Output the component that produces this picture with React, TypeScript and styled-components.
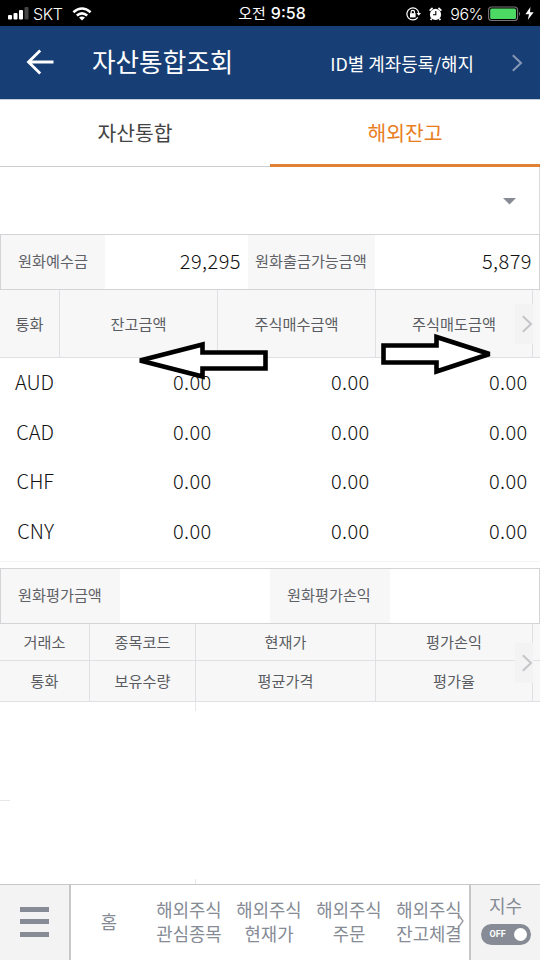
import React from 'react';
import styled, { createGlobalStyle } from 'styled-components';

const GlobalStyle = createGlobalStyle`
  * { box-sizing: border-box; }
  html, body { margin: 0; background: #fff; }
  body { font-family: "Noto Sans CJK KR", sans-serif; overflow: hidden; }
`;

const Screen = styled.div`
  position: relative;
  width: 540px;
  height: 960px;
  display: flex;
  flex-direction: column;
  background: #fff;
  color: #111;
  overflow: hidden;
  white-space: nowrap;
`;

const StatusBar = styled.div`
  height: 26px;
  flex: none;
  display: grid;
  grid-template-columns: 1fr auto 1fr;
  align-items: center;
  padding: 0 6px 0 8px;
  background: #000;
  color: #fff;
`;
const StatusGroup = styled.div<{ $end?: boolean }>`
  display: flex;
  align-items: center;
  height: 26px;
  padding-top: 1px;
  justify-content: ${p => (p.$end ? 'flex-end' : 'flex-start')};
`;
const Carrier = styled.span`
  margin: 0 9px 0 4px;
  font: 300 16px/26px Inter, sans-serif;
  letter-spacing: -0.35px;
`;
const Clock = styled.span`
  display: flex;
  gap: 5px;
  padding: 1px 0 0 2px;
  font: 500 16px/25px Inter, "Noto Sans CJK KR", sans-serif;
`;
const ClockPrefix = styled.span`
  font: 400 15px/24px "Noto Sans CJK KR", sans-serif;
`;
const Percent = styled.span`
  margin: 0 5px 0 8px;
  font: 300 16px/26px Inter, sans-serif;
  letter-spacing: -0.5px;
`;
const Gap = styled.i<{ $w: number }>`
  width: ${p => p.$w}px;
`;

const TitleBar = styled.header`
  height: 74px;
  flex: none;
  display: flex;
  align-items: center;
  padding: 0 17px 0 26px;
  background: #173e75;
  border-bottom: 1px solid #c3cddb;
  color: #fff;
`;
const BackIcon = styled.svg`
  margin-bottom: 2px;
`;
const Title = styled.h1`
  flex: 1;
  margin: 0 0 3px 38px;
  font-size: 25.6px;
  line-height: 40px;
  font-weight: 400;
`;
const TitleLink = styled.span`
  margin: 0 37px 0 0;
  font-size: 17.9px;
  line-height: 30px;
`;

const Tabs = styled.nav`
  height: 67px;
  flex: none;
  display: grid;
  grid-template-columns: 1fr 1fr;
`;
const Tab = styled.div<{ $active?: boolean }>`
  height: 67px;
  text-align: center;
  font-size: 20.4px;
  line-height: 65px;
  color: ${p => (p.$active ? '#e87d1e' : '#444')};
  border-bottom: ${p => (p.$active ? '3px solid #e08236' : '1px solid #ccced1')};
`;

const Picker = styled.div`
  height: 67px;
  flex: none;
  display: flex;
  justify-content: flex-end;
  align-items: center;
  padding: 1px 23px 0 0;
  border-right: 1px solid #d9dadd;
`;

const Summary = styled.div<{ $columns: string }>`
  height: 56px;
  flex: none;
  display: grid;
  grid-template-columns: ${p => p.$columns};
  border: 1px solid #d3d4d7;
`;
const SummaryLabel = styled.div<{ $pad: number }>`
  display: flex;
  align-items: center;
  padding: 0 0 5px ${p => p.$pad}px;
  background: #f7f7f8;
  color: #5f6167;
  font-size: 15.2px;
`;
const SummaryValue = styled.div`
  display: flex;
  align-items: center;
  justify-content: flex-end;
  padding: 0 7px 4px 0;
  font-size: 20px;
  font-weight: 300;
  letter-spacing: 0.45px;
`;

const HeaderGrid = styled.div<{ $columns: string; $rows: string }>`
  position: relative;
  flex: none;
  display: grid;
  grid-template-columns: ${p => p.$columns};
  grid-template-rows: ${p => p.$rows};
`;
const HeaderCell = styled.div`
  display: flex;
  align-items: center;
  justify-content: center;
  padding-bottom: 2px;
  background: #f7f7f8;
  border-right: 1px solid #dfe0e3;
  border-bottom: 1px solid #dfe0e3;
  color: #5a5c62;
  font-size: 15.2px;
  &:empty { border-right: 0; }
`;
const ScrollHint = styled.div`
  position: absolute;
  right: 7px;
  top: 50%;
  margin-top: -20px;
  width: 18px;
  height: 40px;
  display: flex;
  align-items: center;
  justify-content: flex-end;
  background: #f3f3f3;
`;

const Balances = styled.div`
  height: 204px;
  flex: none;
  border-bottom: 1px solid #f5f5f5;
`;
const BalanceRow = styled.div`
  display: grid;
  grid-template-columns: 60px 158px 158px 158px;
  height: 49.6px;
  line-height: 48px;
  font-size: 20px;
  font-weight: 300;
`;
const Currency = styled.span`
  padding-right: 6px;
  text-align: right;
`;
const Amount = styled.span`
  padding-right: 6.4px;
  text-align: right;
  letter-spacing: 0.4px;
`;
const Spacer = styled.div`
  height: 6px;
  flex: none;
`;

const Holdings = styled.div`
  flex: 1;
  display: grid;
  grid-template-columns: 195px 1fr;
  grid-template-rows: 9px 90px 1fr 5px;
`;
const ColumnTick = styled.i<{ $row: number }>`
  grid-column: 2;
  grid-row: ${p => p.$row};
  width: 1px;
  background: #e6e7e9;
`;
const RowTick = styled.i`
  grid-column: 1;
  grid-row: 2;
  width: 10px;
  height: 1px;
  align-self: end;
  background: #e6e7e9;
`;

const Footer = styled.footer`
  height: 76px;
  flex: none;
  display: grid;
  grid-template-columns: 71px 398px 71px;
  border-top: 1px solid #c6c7c9;
  color: #868b95;
`;
const MenuButton = styled.div`
  display: flex;
  flex-direction: column;
  align-items: center;
  gap: 7.4px;
  padding-top: 22px;
  background: #f3f3f4;
  border-right: 2px solid #c6c7c9;
`;
const MenuBar = styled.i`
  width: 29px;
  height: 5px;
  background: #868b95;
`;
const Shortcuts = styled.div`
  position: relative;
  display: grid;
  grid-template-columns: repeat(5, 80px);
  overflow: hidden;
`;
const Shortcut = styled.div`
  display: flex;
  flex-direction: column;
  justify-content: center;
  align-items: center;
  padding-bottom: 2px;
  font-size: 17.8px;
  line-height: 23.5px;
  margin: 0 2px 0 -2px;
`;
const MoreMark = styled.svg`
  position: absolute;
  right: 5px;
  top: 29px;
`;
const IndexPanel = styled.div`
  display: flex;
  flex-direction: column;
  align-items: center;
  background: #f3f3f4;
  border-left: 2px solid #c6c7c9;
  font-size: 18px;
  line-height: 24px;
  padding: 8px 0 0 0;
`;
const Toggle = styled.div`
  display: flex;
  align-items: center;
  justify-content: space-between;
  width: 50px;
  height: 21px;
  margin-top: 7px;
  padding: 0 4px 0 9px;
  border-radius: 11px;
  background: #868b95;
  color: #fff;
  font: 700 9px/21px Roboto, sans-serif;
`;
const Knob = styled.i`
  width: 13px;
  height: 13px;
  border-radius: 50%;
  background: #fff;
`;

const Annotations = styled.svg`
  position: absolute;
  left: 0;
  top: 330px;
`;

const Chevron = ({ color }: { color: string }) => (
  <svg width="12" height="20" viewBox="0 0 12 20" fill="none">
    <path d="M1.8 2.2L10 10L1.8 17.8" stroke={color} strokeWidth="2" />
  </svg>
);

const Signal = () => (
  <svg width="21" height="13" viewBox="0 0 21 13" fill="#fff">
    <rect x="0" y="8" width="4" height="4.5" rx="1" />
    <rect x="5.5" y="6" width="4" height="6.5" rx="1" />
    <rect x="11" y="3" width="4" height="9.5" rx="1" />
    <rect x="16.5" y="0" width="4" height="12.5" rx="1" fill="#444" />
  </svg>
);

const Wifi = () => (
  <svg width="20" height="14" viewBox="0 0 20 14" fill="none" stroke="#fff" strokeWidth="2.6">
    <path d="M1.4 5.2Q10 -2.2 18.6 5.2" />
    <path d="M4.8 8.6Q10 4.2 15.2 8.6" />
    <path d="M10 13.6L7 10.6Q10 8.4 13 10.6Z" fill="#fff" stroke="none" />
  </svg>
);

const RotationLock = () => (
  <svg width="15" height="14" viewBox="0 0 15 14" fill="none" stroke="#fff" strokeWidth="1.2">
    <path d="M11.8 10.4A6 6 0 1 1 12.8 5.8" />
    <path d="M10.6 6H15L12.8 8.8Z" fill="#fff" stroke="none" />
    <rect x="4" y="6.2" width="5.6" height="4.2" fill="#fff" stroke="none" />
    <path d="M5.1 6.5V5a1.7 1.7 0 0 1 3.4 0V6.5" />
  </svg>
);

const Alarm = () => (
  <svg width="13" height="14" viewBox="0 0 13 14">
    <circle cx="6.5" cy="7.4" r="5.6" fill="#fff" />
    <path d="M0.6 3.6L3.6 1M12.4 3.6L9.4 1M2.8 11.4L1.6 13M10.2 11.4L11.4 13" stroke="#fff" strokeWidth="1.7" />
    <path d="M6.8 4V7.7H4" stroke="#000" strokeWidth="1.1" fill="none" />
  </svg>
);

const Battery = () => (
  <svg width="34" height="16" viewBox="0 0 34 16">
    <rect x="0.6" y="1" width="29" height="13.5" rx="3" fill="none" stroke="#777" strokeWidth="1.1" />
    <rect x="2.2" y="2.6" width="25.8" height="10.3" rx="1.5" fill="#4cd964" />
    <path d="M31 5.5Q33 7.8 31 10Z" fill="#777" />
  </svg>
);

const Bolt = () => (
  <svg width="9" height="13" viewBox="0 0 9 13" fill="#fff">
    <path d="M5.4 0L0.4 7.2H4L2.8 13L8.6 5.2H5Z" />
  </svg>
);

const balances = ['AUD', 'CAD', 'CHF', 'CNY'];
const shortcuts = [['홈'], ['해외주식', '관심종목'], ['해외주식', '현재가'], ['해외주식', '주문'], ['해외주식', '잔고체결']];
const balanceHeads = ['통화', '잔고금액', '주식매수금액', '주식매도금액', ''];
const holdingHeads = ['거래소', '종목코드', '현재가', '평가손익', '', '통화', '보유수량', '평균가격', '평가율', ''];

export default function App() {
  return (
    <Screen>
      <GlobalStyle />
      <StatusBar>
        <StatusGroup>
          <Signal />
          <Carrier>SKT</Carrier>
          <Wifi />
        </StatusGroup>
        <Clock><ClockPrefix>오전</ClockPrefix>9:58</Clock>
        <StatusGroup $end>
          <RotationLock />
          <Gap $w={8} />
          <Alarm />
          <Percent>96%</Percent>
          <Battery />
          <Gap $w={3} />
          <Bolt />
        </StatusGroup>
      </StatusBar>

      <TitleBar>
        <BackIcon width="28" height="26" viewBox="0 0 28 26" fill="none" stroke="#fff" strokeWidth="2.8">
          <path d="M14.2 1.5L2.5 13L14.2 24.5M2.5 13H27.5" />
        </BackIcon>
        <Title>자산통합조회</Title>
        <TitleLink>ID별 계좌등록/해지</TitleLink>
        <Chevron color="#8798b5" />
      </TitleBar>

      <Tabs>
        <Tab>자산통합</Tab>
        <Tab $active>해외잔고</Tab>
      </Tabs>

      <Picker>
        <svg width="13" height="7" viewBox="0 0 13 7"><path d="M0 0H13L6.5 6.6Z" fill="#868b95" /></svg>
      </Picker>

      <Summary $columns="104px 143px 127px 1fr">
        <SummaryLabel $pad={17}>원화예수금</SummaryLabel>
        <SummaryValue>29,295</SummaryValue>
        <SummaryLabel $pad={7}>원화출금가능금액</SummaryLabel>
        <SummaryValue>5,879</SummaryValue>
      </Summary>

      <HeaderGrid $columns="60px 158px 158px 157px 7px" $rows="68px">
        {balanceHeads.map((text, i) => <HeaderCell key={i}>{text}</HeaderCell>)}
        <ScrollHint><Chevron color="#c4c5c8" /></ScrollHint>
      </HeaderGrid>

      <Balances>
        {balances.map(code => (
          <BalanceRow key={code}>
            <Currency>{code}</Currency>
            <Amount>0.00</Amount>
            <Amount>0.00</Amount>
            <Amount>0.00</Amount>
          </BalanceRow>
        ))}
      </Balances>
      <Spacer />

      <Summary $columns="119px 150px 120px 1fr">
        <SummaryLabel $pad={17}>원화평가금액</SummaryLabel>
        <SummaryValue />
        <SummaryLabel $pad={17}>원화평가손익</SummaryLabel>
        <SummaryValue />
      </Summary>

      <HeaderGrid $columns="90px 106px 180px 157px 7px" $rows="37px 41px">
        {holdingHeads.map((text, i) => <HeaderCell key={i}>{text}</HeaderCell>)}
        <ScrollHint><Chevron color="#c4c5c8" /></ScrollHint>
      </HeaderGrid>

      <Holdings>
        <ColumnTick $row={1} />
        <RowTick />
        <ColumnTick $row={4} />
      </Holdings>

      <Footer>
        <MenuButton><MenuBar /><MenuBar /><MenuBar /></MenuButton>
        <Shortcuts>
          {shortcuts.map((lines, i) => (
            <Shortcut key={i}>{lines.map(line => <span key={line}>{line}</span>)}</Shortcut>
          ))}
          <MoreMark width="6" height="14" viewBox="0 0 6 14" fill="none">
            <path d="M1 1.5L5 7L1 12.5" stroke="#9a9da5" strokeWidth="1.4" />
          </MoreMark>
        </Shortcuts>
        <IndexPanel>
          지수
          <Toggle>OFF<Knob /></Toggle>
        </IndexPanel>
      </Footer>

      <Annotations width="540" height="60" viewBox="0 330 540 60" fill="#fff" stroke="#000" strokeWidth="4.6" strokeMiterlimit="3">
        <path d="M140 360.5L202.5 344.5V352.5H265.5V368.5H202.5V376.5Z" />
        <path d="M383.5 345.5H436.5V337L489.5 354L436.5 371.5V362.5H383.5Z" />
      </Annotations>
    </Screen>
  );
}
